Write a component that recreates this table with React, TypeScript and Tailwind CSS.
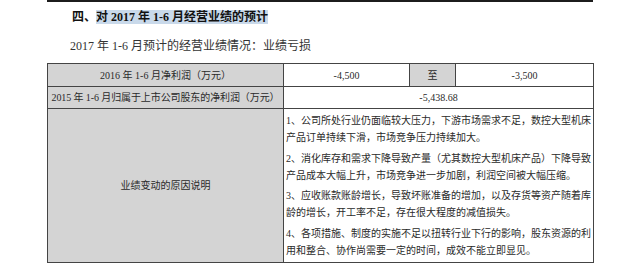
export default function App() {
  const reasons = [
    "1、公司所处行业仍面临较大压力，下游市场需求不足，数控大型机床产品订单持续下滑，市场竞争压力持续加大。",
    "2、消化库存和需求下降导致产量（尤其数控大型机床产品）下降导致产品成本大幅上升，市场竞争进一步加剧，利润空间被大幅压缩。",
    "3、应收账款账龄增长，导致坏账准备的增加，以及存货等资产随着库龄的增长，开工率不足，存在很大程度的减值损失。",
    "4、各项措施、制度的实施不足以扭转行业下行的影响，股东资源的利用和整合、协作尚需要一定的时间，成效不能立即显见。",
  ];

  return (
    <div
      className="w-[640px] h-[271px] bg-white overflow-hidden text-[#1e1e1e]"
      style={{ fontFamily: '"Liberation Serif", "Noto Sans CJK SC", serif' }}
    >
      <div className="ml-[47px] w-[546px] h-[2px] bg-[#1c1c1c]" />

      <div className="ml-[72px] mt-[7px] text-[12px] leading-[16px] font-bold text-[#111]">
        四、<span className="bg-[#c9d9ea]">对 2017 年 1-6 月经营业绩的预计</span>
      </div>

      <div className="ml-[70px] mt-[13px] text-[12px] leading-[16px] text-[#333]">
        2017 年 1-6 月预计的经营业绩情况：业绩亏损
      </div>

      <table className="ml-[47px] mt-[9px] w-[546px] border-collapse table-fixed text-[10px] text-[#2a2a2a]">
        <colgroup>
          <col className="w-[236px]" />
          <col className="w-[126px]" />
          <col className="w-[46px]" />
          <col className="w-[138px]" />
        </colgroup>
        <tbody>
          <tr className="h-[23px]">
            <td className="border border-[#444] bg-[#d4d4d4] text-center p-0 whitespace-nowrap">
              2016 年 1-6 月净利润（万元）
            </td>
            <td className="border border-[#444] text-center p-0">-4,500</td>
            <td className="border border-[#444] bg-[#d4d4d4] text-center p-0">至</td>
            <td className="border border-[#444] text-center p-0">-3,500</td>
          </tr>
          <tr className="h-[22px]">
            <td className="border border-[#444] bg-[#d4d4d4] text-center p-0 whitespace-nowrap tracking-[-0.1px]">
              2015 年 1-6 月归属于上市公司股东的净利润（万元）
            </td>
            <td colSpan={3} className="border border-[#444] text-center p-0">
              -5,438.68
            </td>
          </tr>
          <tr className="h-[152px]">
            <td className="border border-[#444] bg-[#d4d4d4] text-center p-0">
              业绩变动的原因说明
            </td>
            <td colSpan={3} className="border border-[#444] px-[2px] py-[3px] align-top">
              <div className="flex flex-col gap-[3.5px] leading-[17px]">
                {reasons.map((r) => (
                  <p key={r}>{r}</p>
                ))}
              </div>
            </td>
          </tr>
        </tbody>
      </table>
    </div>
  );
}
